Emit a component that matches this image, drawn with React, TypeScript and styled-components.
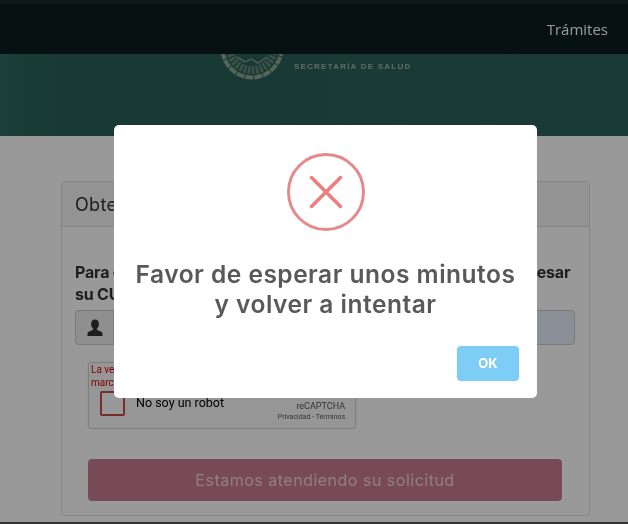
import styled, { createGlobalStyle } from "styled-components";

const BRAND_FONT = `"Inter", "Noto Sans", "Liberation Sans", sans-serif`;

const GlobalStyle = createGlobalStyle`
    html, body {
        margin: 0;
        padding: 0;
        height: 524px;
        overflow: hidden;
        background: #fff;
    }
    * {
        box-sizing: border-box;
    }
`;

const UserIcon = () => (
    <svg width="16" height="18" viewBox="0 0 16 18" aria-hidden>
        <path
            fill="#333"
            d="M8 0.5c2.5 0 3.9 1.9 3.9 4.5 0 2-.8 3.7-1.8 4.6-.4.4-.3 1 .2 1.3 1.9 1 5.2 1.6 5.2 3.6V17H.5v-2.500c0-2 3.300-2.600 5.200-3.600.5-.3.6-.9.200-1.300C4.900 8.700 4.100 7 4.100 5 4.100 2.400 5.500.5 8 .5z"
        />
    </svg>
);

const Emblem = () => (
    <svg width="70" height="27" viewBox="0 39 70 27" aria-hidden>
        <circle cx="35" cy="33" r="29.500" fill="none" stroke="#8fa996" strokeWidth="4" strokeDasharray="8 1" />
        <circle cx="35" cy="33" r="22" fill="none" stroke="#63877a" strokeWidth="8" strokeDasharray="2.500 1.500" />
        <path d="M20 42l8 5 6-3 7 4 9-6" fill="none" stroke="#7f9c8e" strokeWidth="1.500" />
    </svg>
);

const App = () => (
    <>
        <GlobalStyle />
        <Page>
            <Navbar>
                <NavLink>Trámites</NavLink>
            </Navbar>
            <Hero>
                <Emblem />
                <Ministry>SECRETARÍA DE SALUD</Ministry>
            </Hero>
            <Main>
                <Panel>
                    <PanelHeading>Obtener comprobante</PanelHeading>
                    <PanelBody>
                        <Lead>
                            Para obtener su comprobante de trámite en red, favor de ingresar
                            <br />
                            su CURP
                        </Lead>
                        <InputGroup>
                            <Addon>
                                <UserIcon />
                            </Addon>
                            <Field />
                        </InputGroup>
                        <Captcha>
                            <CaptchaError>
                                La verificación ha caducado. Vuelve a
                                <br />
                                marcar la casilla de verificación.
                            </CaptchaError>
                            <CaptchaRow>
                                <CaptchaBox />
                                <CaptchaLabel>No soy un robot</CaptchaLabel>
                                <CaptchaBrand>
                                    <CaptchaName>reCAPTCHA</CaptchaName>
                                    <CaptchaLinks>Privacidad - Términos</CaptchaLinks>
                                </CaptchaBrand>
                            </CaptchaRow>
                        </Captcha>
                        <Submit type="button">Estamos atendiendo su solicitud</Submit>
                    </PanelBody>
                </Panel>
            </Main>
            <Overlay>
                <Modal role="dialog" aria-modal="true">
                    <ErrorIcon>
                        <svg width="34" height="34" viewBox="0 0 34 34" aria-hidden>
                            <path d="M2.500 2.500l29 29M31.500 2.500l-29 29" stroke="#ee7d7d" strokeWidth="3.500" strokeLinecap="round" />
                        </svg>
                    </ErrorIcon>
                    <ModalTitle>
                        Favor de esperar unos minutos
                        <br />y volver a intentar
                    </ModalTitle>
                    <ModalActions>
                        <OkButton type="button">OK</OkButton>
                    </ModalActions>
                </Modal>
            </Overlay>
        </Page>
    </>
);

export default App;

const Page = styled.div`
    position: relative;
    width: 628px;
    height: 524px;
    overflow: hidden;
    background: #fff;
    border-bottom: 2px solid #333;
    font-family: ${BRAND_FONT};
    filter: blur(0.35px);
`;

const Navbar = styled.header`
    height: 54px;
    padding: 0 20px;
    display: flex;
    align-items: center;
    justify-content: flex-end;
    background: #0b1f1d;
    border-top: 4px solid #142b2b;
`;

const NavLink = styled.a`
    font-family: "Open Sans", "Noto Sans", sans-serif;
    font-size: 15px;
    color: #fff;
`;

const Hero = styled.div`
    height: 82px;
    padding-left: 217px;
    display: flex;
    align-items: flex-start;
    gap: 7px;
    background: linear-gradient(90deg, #2d6a60 0, #2b6459 40px, #2a5f58 62px, #2a6259 100%);
`;

const Ministry = styled.div`
    margin-top: 8px;
    font-family: "Liberation Sans", sans-serif;
    font-size: 8px;
    font-weight: 700;
    letter-spacing: 1.22px;
    color: #9fb5a6;
`;

const Main = styled.main`
    padding: 45px 38px 0 61px;
`;

const Panel = styled.section`
    height: 335px;
    border: 1px solid #ddd;
    border-radius: 4px;
    background: #fff;
`;

const PanelHeading = styled.div`
    height: 45px;
    padding: 0 13px;
    display: flex;
    align-items: center;
    background: #f5f5f5;
    border-bottom: 1px solid #ddd;
    font-size: 18px;
    letter-spacing: 0.3px;
    color: #333;
`;

const PanelBody = styled.div`
    padding: 34px 14px 0 13px;
`;

const Lead = styled.p`
    margin: 0 0 5px;
    font-size: 16px;
    line-height: 22px;
    font-weight: 700;
    letter-spacing: -0.2px;
    color: #333;
    white-space: nowrap;
`;

const InputGroup = styled.div`
    height: 35px;
    display: flex;
`;

const Addon = styled.span`
    width: 38px;
    display: flex;
    align-items: center;
    justify-content: center;
    background: #eee;
    border: 1px solid #ccc;
    border-right: none;
    border-radius: 4px 0 0 4px;
`;

const Field = styled.div`
    flex: 1;
    background: #e8f0fe;
    border: 1px solid #ccc;
    border-radius: 0 4px 4px 0;
`;

const Captcha = styled.div`
    width: 268px;
    height: 67px;
    margin: 17px 0 30px 13px;
    padding: 0 10px 0 2px;
    background: #fafafa;
    border: 1px solid #d3d3d3;
    border-radius: 3px;
    box-shadow: 0 0 3px rgba(0, 0, 0, 0.08);
    font-family: "Roboto", "Liberation Sans", sans-serif;
`;

const CaptchaError = styled.div`
    height: 28px;
    font-size: 10px;
    line-height: 13px;
    color: #d00;
    white-space: nowrap;
`;

const CaptchaRow = styled.div`
    display: flex;
    align-items: flex-start;
    padding-left: 9px;
`;

const CaptchaBox = styled.div`
    width: 25px;
    height: 25px;
    border: 2px solid #c94a4a;
    border-radius: 2px;
    background: #fff;
`;

const CaptchaLabel = styled.span`
    margin: 4px 0 0 11px;
    font-size: 12.500px;
    line-height: 16px;
    color: #000;
`;

const CaptchaBrand = styled.div`
    margin-left: auto;
    padding-top: 9px;
    text-align: right;
`;

const CaptchaName = styled.div`
    font-size: 9px;
    line-height: 12px;
    color: #555;
`;

const CaptchaLinks = styled.div`
    font-size: 7px;
    line-height: 10px;
    color: #555;
`;

const Submit = styled.button`
    display: block;
    width: 474px;
    height: 42px;
    margin-left: 13px;
    padding: 0;
    border: none;
    border-radius: 4px;
    background: #c87c92;
    font-family: ${BRAND_FONT};
    font-size: 16px;
    letter-spacing: 0.5px;
    color: #f0d2da;
`;

const Overlay = styled.div`
    position: absolute;
    inset: 0;
    padding-left: 23px;
    display: flex;
    align-items: center;
    justify-content: center;
    background: rgba(0, 0, 0, 0.4);
`;

const Modal = styled.div`
    width: 423px;
    height: 273px;
    padding-top: 28px;
    display: flex;
    flex-direction: column;
    align-items: center;
    background: #fff;
    border-radius: 5px;
`;

const ErrorIcon = styled.div`
    width: 78px;
    height: 78px;
    display: flex;
    align-items: center;
    justify-content: center;
    border: 3.500px solid #e58a8a;
    border-radius: 50%;
`;

const ModalTitle = styled.h2`
    margin: 28px 0 0;
    font-size: 24.500px;
    line-height: 30px;
    font-weight: 600;
    letter-spacing: 0.5px;
    text-align: center;
    color: #595959;
    white-space: nowrap;
`;

const ModalActions = styled.div`
    width: 100%;
    margin-top: 27px;
    padding-right: 18px;
    display: flex;
    justify-content: flex-end;
`;

const OkButton = styled.button`
    width: 62px;
    height: 35px;
    padding: 0;
    border: none;
    border-radius: 4px;
    background: #7ecdf7;
    font-family: ${BRAND_FONT};
    font-size: 13px;
    font-weight: 700;
    color: #fff;
`;
